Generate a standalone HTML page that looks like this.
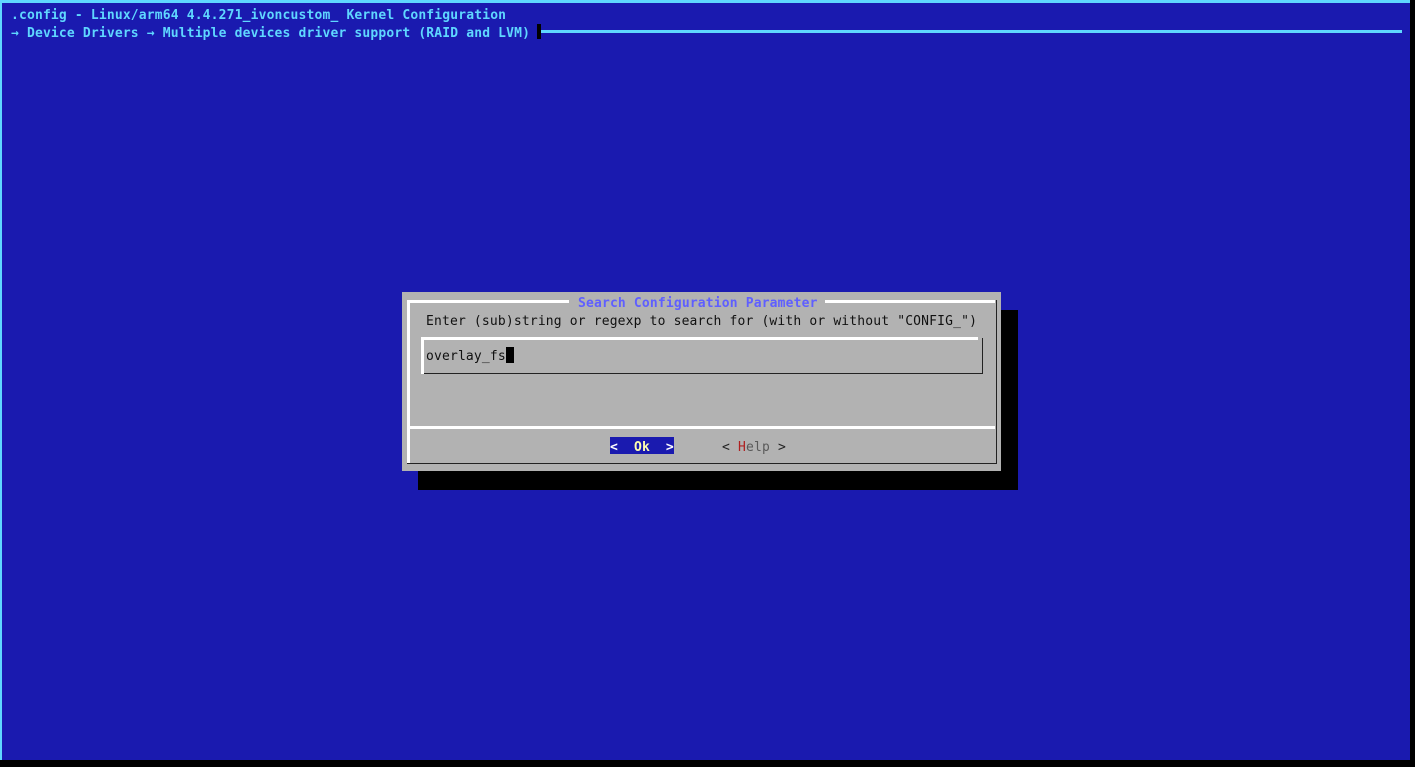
<!DOCTYPE html>
<html><head><meta charset="utf-8"><style>
*{margin:0;padding:0;box-sizing:border-box}
body{width:1415px;height:767px;background:#000;position:relative;overflow:hidden;font-family:"DejaVu Sans Mono","Liberation Mono",monospace;font-size:13px;letter-spacing:0.16px}
.a{position:absolute}
.t{position:absolute;white-space:pre;line-height:18px}
</style></head><body>
<div class="a" style="left:0;top:0;width:1410px;height:760px;background:#5fd7ff"></div>
<div class="a" style="left:2px;top:3px;width:1408px;height:757px;background:#1a1aaf"></div>
<div class="t" style="left:11px;top:7px;color:#5fd7ff;font-weight:bold">.config - Linux/arm64 4.4.271_ivoncustom_ Kernel Configuration</div>
<div class="t" style="left:11px;top:25px;color:#5fd7ff;font-weight:bold">→ Device Drivers → Multiple devices driver support (RAID and LVM)</div>
<div class="a" style="left:537px;top:24px;width:4px;height:15px;background:#000"></div>
<div class="a" style="left:541px;top:30px;width:861px;height:3px;background:#5fd7ff"></div>

<div class="a" style="left:418px;top:310px;width:600px;height:180px;background:#000"></div>
<div class="a" style="left:402px;top:292px;width:599px;height:179px;background:#b2b2b2"></div>
<div class="a" style="left:407px;top:300px;width:162px;height:3px;background:#fff"></div>
<div class="a" style="left:825px;top:300px;width:170px;height:3px;background:#fff"></div>
<div class="a" style="left:407px;top:300px;width:3px;height:164px;background:#fff"></div>
<div class="a" style="left:996px;top:300px;width:1px;height:164px;background:#222"></div>
<div class="a" style="left:407px;top:463px;width:590px;height:1px;background:#222"></div>
<div class="a" style="left:407px;top:426px;width:588px;height:3px;background:#fff"></div>
<div class="t" style="left:578px;top:295px;color:#5f5fff;font-weight:bold">Search Configuration Parameter</div>
<div class="t" style="left:426px;top:313px;color:#111">Enter (sub)string or regexp to search for (with or without "CONFIG_")</div>
<div class="a" style="left:421px;top:337px;width:557px;height:3px;background:#fff"></div>
<div class="a" style="left:421px;top:337px;width:3px;height:37px;background:#fff"></div>
<div class="a" style="left:424px;top:373px;width:559px;height:1px;background:#222"></div>
<div class="a" style="left:982px;top:338px;width:1px;height:36px;background:#222"></div>
<div class="t" style="left:426px;top:348px;color:#111">overlay_fs</div>
<div class="a" style="left:506px;top:347px;width:8px;height:16px;background:#000"></div>
<div class="a" style="left:610px;top:437px;width:64px;height:17px;background:#1a1aaf"></div>
<div class="t" style="left:610px;top:439px;color:#fff;font-weight:bold">&lt;  <span style="color:#ffffaf">Ok</span>  &gt;</div>
<div class="t" style="left:722px;top:439px;color:#222">&lt; <span style="color:#af2020">H</span><span style="color:#5a5a5a">elp</span> &gt;</div>
</body></html>
